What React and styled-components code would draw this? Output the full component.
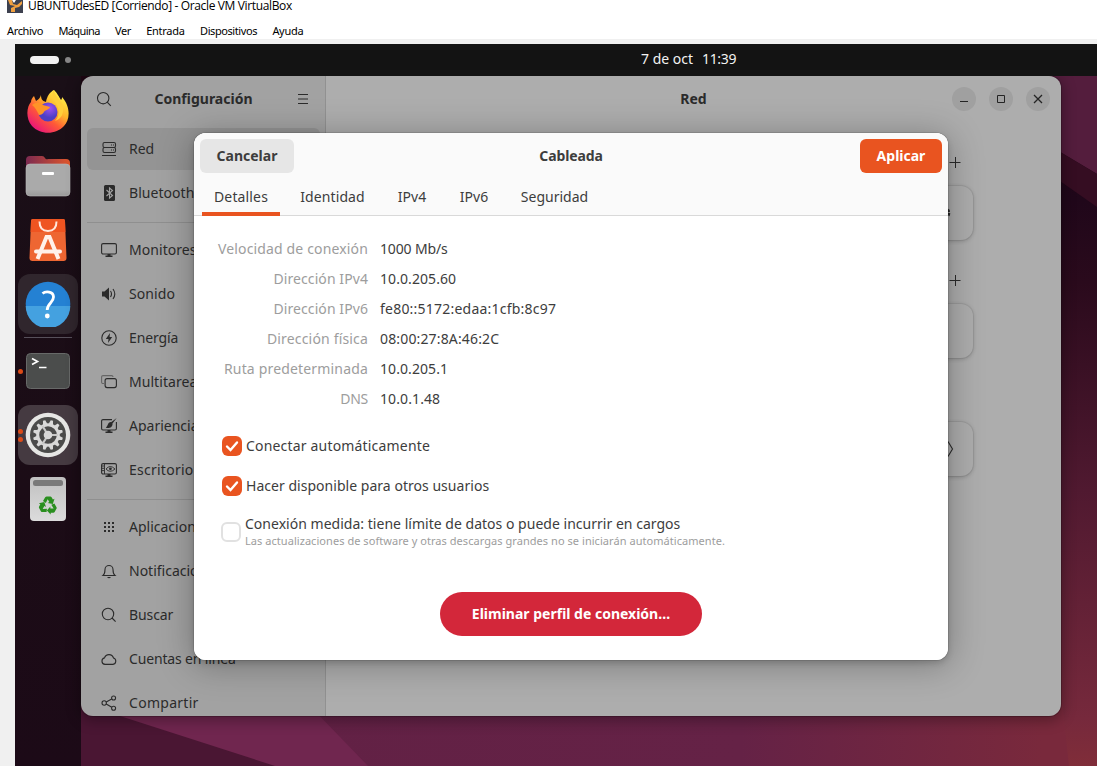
import React from "react";
import styled, { createGlobalStyle, css } from "styled-components";

const Global = createGlobalStyle`
  * { box-sizing: border-box; }
  html, body { margin: 0; padding: 0; overflow: hidden; background: #f0f0f0; }
  body { font-family: "Noto Sans", "Open Sans", sans-serif; }
`;

const Label = styled.span`
  white-space: pre;
  letter-spacing: ${(p) => p.$track || 0}px;
`;

const HostWindow = styled.div`
  width: 1097px;
  height: 766px;
  display: flex;
  flex-direction: column;
  overflow: hidden;
  background: #f0f0f0;
`;
const HostTitle = styled.div`
  height: 22px;
  flex: none;
  display: flex;
  align-items: flex-start;
  gap: 5px;
  padding-left: 7px;
  background: #fff;
  color: #000;
  font: 12px/12px "Open Sans", sans-serif;
  & > svg { flex: none; }
`;
const HostMenu = styled.div`
  height: 17px;
  flex: none;
  display: flex;
  gap: 15.4px;
  padding-left: 7px;
  background: #fff;
  color: #000;
  font: 11px/17px "Noto Sans", sans-serif;
`;
const Guest = styled.div`
  flex: 1;
  margin: 5px 0 0 15px;
  display: flex;
  flex-direction: column;
  min-height: 0;
`;
const TopBar = styled.div`
  height: 32px;
  flex: none;
  display: grid;
  grid-template-columns: 626px 1fr;
  align-items: center;
  background: #131313;
  color: #f2f2f2;
  font-size: 14px;
  line-height: 20px;
`;
const Workspaces = styled.div`
  display: flex;
  align-items: center;
  gap: 6px;
  padding-left: 15px;
`;
const ActiveSpace = styled.i`
  width: 29px;
  height: 8px;
  border-radius: 4px;
  background: #f2f2f2;
`;
const IdleSpace = styled.i`
  width: 6px;
  height: 6px;
  border-radius: 3px;
  background: #868686;
`;
const Clock = styled.div`
  display: flex;
  gap: 9px;
  margin-top: -3px;
`;
const Desktop = styled.div`
  flex: 1;
  display: flex;
  position: relative;
  isolation: isolate;
  overflow: hidden;
`;
const Wallpaper = styled.svg`
  position: absolute;
  inset: 0;
  z-index: -1;
`;
const Dock = styled.div`
  width: 66px;
  flex: none;
  padding: 6px 3px;
  display: flex;
  flex-direction: column;
  gap: 4px;
  background: linear-gradient(#1a0f17, #1b0c16 60%, #1c0a17);
`;
const DockItem = styled.div`
  width: 60px;
  height: 60px;
  flex: none;
  display: grid;
  place-items: center;
  position: relative;
  border-radius: 12px;
  background: ${(p) => p.$bg || "transparent"};
`;
const DockLine = styled.div`
  height: 1px;
  flex: none;
  margin: -1px 6px;
  background: #57505a;
`;
const Running = styled.div`
  position: absolute;
  left: 0;
  top: 0;
  height: 100%;
  display: flex;
  flex-direction: column;
  justify-content: center;
  gap: 3px;
  & > i { width: 5px; height: 5px; border-radius: 50%; background: #dc4a17; }
`;

const Window = styled.div`
  width: 980px;
  height: 640px;
  flex: none;
  display: flex;
  position: relative;
  border-radius: 12px;
  box-shadow: 0 3px 14px 2px rgba(0, 0, 0, 0.3), 0 0 0 1px rgba(20, 10, 15, 0.25);
  color: #2b2b2b;
`;
const Sidebar = styled.div`
  width: 245px;
  height: 100%;
  flex: none;
  padding: 0 5px 0 6px;
  overflow: hidden;
  border-right: 1px solid #919191;
  border-radius: 12px 0 0 12px;
  background: #a2a2a2;
`;
const SideHeader = styled.div`
  height: 45px;
  display: grid;
  grid-template-columns: 34px 1fr 34px;
  align-items: center;
  justify-items: center;
  margin-bottom: 7px;
  font-size: 14px;
  font-weight: 700;
  color: #2b2b2b;
  & > span { margin-top: -1px; }
`;
const NavList = styled.div`
  display: flex;
  flex-direction: column;
  gap: 2px;
`;
const NavRow = styled.div`
  height: 42px;
  flex: none;
  display: flex;
  align-items: center;
  gap: 12px;
  padding-left: 14px;
  border-radius: 6px;
  font-size: 14px;
  background: ${(p) => (p.$active ? "#949494" : "transparent")};
  & > svg { flex: none; }
  & > span { margin-top: -2px; }
`;
const NavLine = styled.div`
  height: 1px;
  flex: none;
  margin: 6px 0 4px;
  background: #8f8f8f;
`;
const Content = styled.div`
  flex: 1;
  display: flex;
  flex-direction: column;
  align-items: center;
  overflow: hidden;
  border-radius: 0 12px 12px 0;
  background: #adadad;
`;
const ContentHeader = styled.div`
  width: 100%;
  height: 46px;
  flex: none;
  display: grid;
  grid-template-columns: 1fr auto 1fr;
  align-items: center;
  padding: 0 11px;
  font-size: 14px;
  font-weight: 700;
  & > span { margin-top: -2px; }
`;
const WindowButtons = styled.div`
  grid-column: 3;
  justify-self: end;
  display: flex;
  gap: 13px;
`;
const RoundButton = styled.div`
  width: 24px;
  height: 24px;
  border-radius: 50%;
  background: #a0a0a0;
`;
const Section = styled.div`
  width: 559px;
  margin-top: 22px;
`;
const SectionHead = styled.div`
  height: 36px;
  display: flex;
  align-items: center;
  justify-content: flex-end;
  padding-right: 10px;
`;
const Card = styled.div`
  height: 54px;
  margin: 6px 0 0;
  display: flex;
  align-items: center;
  justify-content: flex-end;
  padding-right: ${(p) => p.$end || 18}px;
  border-radius: 12px;
  background: #adadad;
  box-shadow: 0 0 0 1px rgba(0, 0, 0, 0.05), 0 1px 4px rgba(0, 0, 0, 0.22);
`;

const Dialog = styled.div`
  position: absolute;
  left: 113px;
  top: 57px;
  width: 754px;
  height: 527px;
  overflow: hidden;
  border-radius: 12px;
  background: #fff;
  color: #3d3d3d;
`;
const DialogShadow = styled(Dialog)`
  overflow: visible;
  box-shadow: 0 3px 6px rgba(0, 0, 0, 0.16), 0 4px 34px 2px rgba(0, 0, 0, 0.28), 0 0 0 1px rgba(0, 0, 0, 0.1);
`;
const DialogHead = styled.div`
  height: 83px;
  background: #fafafa;
  border-bottom: 1px solid #d9d9d9;
`;
const DialogBar = styled.div`
  height: 46px;
  display: grid;
  grid-template-columns: 1fr auto 1fr;
  align-items: center;
  padding: 0 6px;
  font-size: 14px;
  font-weight: 700;
  margin-bottom: 1px;
  & > span { margin-top: -2px; }
`;
const Button = styled.button`
  height: 34px;
  width: ${(p) => p.$w}px;
  padding: 0 0 2px;
  border: 0;
  border-radius: 6px;
  font: 700 14px "Noto Sans", sans-serif;
  background: #e6e6e6;
  color: #3d3d3d;
  ${(p) => p.$kind === "suggested" && css`
    justify-self: end;
    background: #e95420;
    color: #fff;
  `}
  ${(p) => p.$kind === "destructive" && css`
    height: 44px;
    border-radius: 22px;
    background: #d3273a;
    color: #fff;
  `}
`;
const Tabs = styled.div`
  display: flex;
  gap: 8px;
  padding-left: 8px;
`;
const Tab = styled.div`
  width: ${(p) => p.$w}px;
  height: 36px;
  text-align: center;
  font-size: 14px;
  line-height: 33px;
  box-shadow: ${(p) => (p.$active ? "inset 0 -4px #e95420" : "none")};
`;
const Details = styled.div`
  display: grid;
  grid-template-columns: 174px 1fr;
  column-gap: 12px;
  grid-auto-rows: 30px;
  align-items: center;
  padding-top: 17px;
  font-size: 14px;
`;
const Key = styled.div`
  text-align: right;
  color: #9d9d9d;
`;
const Options = styled.div`
  display: flex;
  flex-direction: column;
  padding: 13px 0 0 27px;
`;
const Option = styled.div`
  height: 40px;
  display: flex;
  align-items: center;
  gap: 4px;
  padding-left: ${(p) => (p.$tall ? 0 : 1)}px;
  margin-top: ${(p) => (p.$tall ? 6 : 0)}px;
  font-size: 14px;
  & > span { margin-top: -2px; }
`;
const Box = styled.i`
  width: 20px;
  height: 20px;
  flex: none;
  border-radius: 6px;
  background: ${(p) => (p.$on ? "#e95420" : "#fff")};
  border: ${(p) => (p.$on ? "0" : "2px solid #e1e1e1")};
  & > svg { display: block; }
`;
const TwoLines = styled.div`
  display: flex;
  flex-direction: column;
  line-height: 18px;
`;
const Hint = styled.div`
  color: #9d9d9d;
  font-size: 11px;
  line-height: 16px;
`;
const Foot = styled.div`
  display: flex;
  justify-content: center;
  padding-top: 40px;
`;

const Sym = ({ children, size = 16 }) => (
  <svg width={size} height={size} viewBox="0 0 16 16" fill="none" stroke="#2b2b2b" strokeWidth="1.1">{children}</svg>
);
const SearchIcon = () => <Sym><circle cx="7.2" cy="7.2" r="5.7" /><path d="M11.2 11.2l3.600 3.600" /></Sym>;
const monitor = <><rect x=".6" y="1.6" width="14.8" height="10.4" rx="1.5" /><path d="M6.5 12h3v1.5h2V15h-7v-1.5h2z" fill="#2b2b2b" stroke="none" /></>;
const icons = {
  red: <><rect x="2" y="1.5" width="12.5" height="5" rx="1.5" /><rect x="2" y="6.5" width="12.5" height="5" rx="1.5" /><path d="M1 14.5h14M10 4h1M12 4h1M10 9h1M12 9h1" /></>,
  bt: <><rect x="3" y="0" width="11" height="16" rx="1.5" fill="#2b2b2b" stroke="none" /><path d="M5.5 5l6 5.5L8.5 13V3l3 2.5-6 5.5" stroke="#a2a2a2" /></>,
  mon: monitor,
  son: <><path d="M1 5.5h2.5L8 1.5v13L3.5 10.5H1z" fill="#2b2b2b" stroke="none" /><path d="M9.5 5q2 3 0 6M12 3q3.6 5 0 10" /></>,
  ene: <><circle cx="8" cy="8" r="7.2" /><path d="M9 3L4.8 9h2.7L7 13l4.2-6H8.6z" fill="#2b2b2b" stroke="none" /></>,
  mul: <><path d="M3 9.5H2A1.4 1.4 0 0 1 .6 8V3A1.4 1.4 0 0 1 2 1.6h8.5A1.4 1.4 0 0 1 12 3" stroke="#666" /><rect x="4.1" y="4.6" width="11.3" height="9" rx="2" /></>,
  apa: <><path d="M11 1.6H2A1.4 1.4 0 0 0 .6 3v7.6A1.4 1.4 0 0 0 2 12h12a1.4 1.4 0 0 0 1.4-1.4V4" /><path d="M6.5 12h3v1.5h2V15h-7v-1.5h2zM15.7 0L10 4.2l1.3 1.5zM9.700 4C7 3.800 7 8 4.800 9.700c3.500 1.100 7-.7 6.700-4z" fill="#2b2b2b" stroke="none" /></>,
  esc: <>{monitor}<path d="M3.5 2v10M1 4h2M1 6.3h2M1 8.6h2M5 7q4-5 9 0-5 4.6-9 0z" strokeWidth=".9" /><circle cx="9.4" cy="6.8" r="1.4" fill="#2b2b2b" stroke="none" /></>,
  apl: <path d="M3 4h2M7 4h2M11 4h2M3 8h2M7 8h2M11 8h2M3 12h2M7 12h2M11 12h2" strokeWidth="2" />,
  not: <><path d="M2 12.5h12c-1.8-1.5-2-3-2-6a4 4 0 0 0-8 0c0 3-.2 4.500-2 6z" /><path d="M6 14h4q-2 2.500-4 0z" fill="#2b2b2b" stroke="none" /></>,
  bus: <><circle cx="7" cy="7" r="5.700" /><path d="M11 11l3.600 3.600" /></>,
  cue: <path d="M4 13.400a3.300 3.300 0 0 1-.5-6.500A4.700 4.700 0 0 1 12.500 7 3.300 3.300 0 0 1 12 13.400z" />,
  com: <><circle cx="3.200" cy="8" r="2.200" /><circle cx="12.600" cy="3" r="2" /><circle cx="12.600" cy="13.300" r="2" /><path d="M5.200 7l5.500-3M5.200 9l5.600 3.300" /></>,
};

const menus = [["Archivo", -0.36], ["Máquina", -0.6], ["Ver", -0.5], ["Entrada", -0.26], ["Dispositivos", -0.42], ["Ayuda", -0.28]];

const nav = [
  ["red", "Red"], ["bt", "Bluetooth", 0.05], null,
  ["mon", "Monitores", 0.05], ["son", "Sonido", 0.1], ["ene", "Energía", -0.1], ["mul", "Multitarea", 0.05], ["apa", "Apariencia"], ["esc", "Escritorio remoto", 0.25], null,
  ["apl", "Aplicaciones"], ["not", "Notificaciones"], ["bus", "Buscar", -0.1], ["cue", "Cuentas en línea", -0.15], ["com", "Compartir", 0.28],
];

const details = [
  ["Velocidad de conexión", "1000 Mb/s", 0.15, -0.15],
  ["Dirección IPv4", "10.0.205.60", 0.08, 0.08],
  ["Dirección IPv6", "fe80::5172:edaa:1cfb:8c97", 0.08, 0.22],
  ["Dirección física", "08:00:27:8A:46:2C", 0.17, 0.15],
  ["Ruta predeterminada", "10.0.205.1", 0.17, 0.08],
  ["DNS", "10.0.1.48", -0.3, 0.1],
];

const Firefox = () => (
  <svg width="44" height="46" viewBox="0 0 44 46">
    <defs>
      <linearGradient id="ffa" x1=".85" y1=".1" x2=".2" y2=".95">
        <stop offset="0" stopColor="#fff14a" /><stop offset=".35" stopColor="#ffb52b" /><stop offset=".62" stopColor="#ff5a36" /><stop offset="1" stopColor="#e8127c" />
      </linearGradient>
      <radialGradient id="ffb" cx=".6" cy=".3"><stop offset="0" stopColor="#a050f0" /><stop offset="1" stopColor="#4d3fc4" /></radialGradient>
    </defs>
    <path d="M28 1c4 4 5 7 7 10 1-1 1-2 1-3 9 10 8 23 2 29C30 46 14 46 6 37-1 29 1 17 5 13c0-2 1-4 3-6l2 5c3-2 4-3 5-6 0 5 2 6 5 7 1-6 4-10 8-12z" fill="url(#ffa)" />
    <circle cx="22" cy="23" r="9.500" fill="url(#ffb)" />
    <path d="M6 16c4-3 8-3 11 0 2 1 5 1 7 2-1 3-5 3-6 5-1 2-3 3-5 3-2-4-4-8-7-10z" fill="#ff9427" />
    <path d="M28 1c-4 5 0 10 3 15 3 6 2 12-2 16 6-2 9-7 8-14-1-7-8-9-9-17z" fill="#ffcf3a" />
  </svg>
);
const Files = () => (
  <svg width="46" height="42" viewBox="0 0 46 42">
    <defs>
      <linearGradient id="fa"><stop offset="0" stopColor="#7c2a50" /><stop offset="1" stopColor="#e0572c" /></linearGradient>
      <linearGradient id="fb" x2="0" y2="1"><stop offset="0" stopColor="#aaa" /><stop offset=".8" stopColor="#aaa" /><stop offset="1" stopColor="#999" /></linearGradient>
    </defs>
    <path d="M1 5q0-4 4-4h12q2 0 3 2t3 1h18q4 0 4 4v12H1z" fill="url(#fa)" />
    <rect x="1" y="9" width="44" height="32" rx="4" fill="url(#fb)" stroke="#bbb" strokeWidth=".6" />
    <rect x="17" y="17" width="12" height="3" rx="1" fill="#fff" />
  </svg>
);
const Store = () => (
  <svg width="38" height="44" viewBox="0 0 38 44">
    <path d="M4 1h30q2 0 2 2l1.500 37q0 3-3 3h-31q-3 0-3-3L2 3q0-2 2-2z" fill="#ee6632" />
    <path d="M4 1h30q2 0 2 2l.4 11H1.600L2 3q0-2 2-2z" fill="#ef5421" />
    <path d="M10.500 3.500q0 9.500 8.500 9.500t8.500-9.500" fill="none" stroke="#ffe7dc" strokeWidth="2" />
    <path d="M8.500 41L17.500 19h3l9 22" fill="none" stroke="#fff1ea" strokeWidth="4" />
    <path d="M7 33.500h24" stroke="#fff1ea" strokeWidth="4" strokeLinecap="round" />
  </svg>
);
const Help = () => (
  <svg width="46" height="46" viewBox="0 0 46 46">
    <circle cx="23" cy="23" r="22.300" fill="#2481d3" />
    <path d="M.7 25a22.300 22.300 0 0 0 44.600 0z" fill="#44a1e0" />
    <path d="M17.500 12.500c3-2.500 11-2.500 11 3.500 0 6-6.300 6-6.300 13" fill="none" stroke="#fff" strokeWidth="2.800" />
    <circle cx="22.300" cy="35" r="2.400" fill="#fff" />
  </svg>
);
const Terminal = () => (
  <svg width="46" height="38" viewBox="0 0 46 38">
    <rect x="1.500" y="1.500" width="43" height="35" rx="4" fill="#4b4d4c" stroke="#676968" />
    <path d="M7 6.500l5.500 3-5.500 3" fill="none" stroke="#fff" strokeWidth="1.700" />
    <path d="M14 15.500h7.500" stroke="#fff" strokeWidth="1.500" />
  </svg>
);
const Settings = () => (
  <svg width="46" height="46" viewBox="0 0 46 46">
    <circle cx="23" cy="23" r="22.300" fill="#e6e6e4" />
    <circle cx="23" cy="23" r="18" fill="#4b4b4a" />
    {Array.from({ length: 12 }, (_, i) => <path key={i} d="M20.800 12l1-4h2.400l1 4z" fill="#d9d9d8" transform={`rotate(${i * 30 + 15} 23 23)`} />)}
    <circle cx="23" cy="23" r="10.300" fill="none" stroke="#d9d9d8" strokeWidth="3" />
    <path d="M23 23h10M23 23l-5.500-9M23 23l-5.500 9" stroke="#c8c8c7" strokeWidth="2.200" />
    <circle cx="23" cy="23" r="4.300" fill="#d9d9d8" />
  </svg>
);
const Trash = () => (
  <svg width="38" height="46" viewBox="0 0 38 46">
    <defs><linearGradient id="tr" x2="0" y2="1"><stop offset="0" stopColor="#c0c0c0" /><stop offset="1" stopColor="#dcdcdc" /></linearGradient></defs>
    <rect x="1" y="1" width="36" height="44" rx="4" fill="url(#tr)" />
    <rect x="4" y="4" width="30" height="6" rx="2.500" fill="#7a7a7a" />
    <g fill="#2a8f1f">
      {[0, 120, 240].map((a) => (
        <g key={a} transform={`rotate(${a} 19 29.500)`}>
          <path d="M14 25l2.200-3.700q.5-.8 1.500-.8h3.600q.8 0 1.300.8l1.300 2.200 1.600-.8-1.700 5.300-5.200-1 1.700-1-1.600-2.800-1.900 3.800z" />
        </g>
      ))}
    </g>
  </svg>
);

export default function App() {
  return (
    <HostWindow>
      <Global />
      <HostTitle>
        <svg width="16" height="13" viewBox="0 0 16 13">
          <path d="M0 0h16v13H0z" fill="#3d414f" />
          <path d="M1 0h4l1 4 4 1 5-4v3l-3 3-4 1v4H4V8l4-2-5-1z" fill="#f0a040" />
          <path d="M5 0h4l-2 3z" fill="#fff" />
        </svg>
        <Label $track={-0.36}>UBUNTUdesED [Corriendo] - Oracle VM VirtualBox</Label>
      </HostTitle>
      <HostMenu>
        {menus.map(([t, track]) => <Label key={t} $track={track}>{t}</Label>)}
      </HostMenu>
      <Guest>
        <TopBar>
          <Workspaces><ActiveSpace /><IdleSpace /></Workspaces>
          <Clock><Label>7 de oct</Label><Label $track={-0.35}>11:39</Label></Clock>
        </TopBar>
        <Desktop>
          <Wallpaper width="1082" height="690" viewBox="15 76 1082 690">
            <defs>
              <linearGradient id="wr" x2="0" y2="1"><stop offset="0" stopColor="#1d0612" /><stop offset=".18" stopColor="#20071a" /><stop offset=".3" stopColor="#2a0a1c" /><stop offset=".6" stopColor="#501930" /><stop offset=".93" stopColor="#76293c" /><stop offset="1" stopColor="#802d39" /></linearGradient>
              <linearGradient id="wb" gradientUnits="userSpaceOnUse" x1="320" y1="0" x2="1070" y2="30"><stop offset="0" stopColor="#622145" /><stop offset=".6" stopColor="#652246" /><stop offset="1" stopColor="#79293c" /></linearGradient>
            </defs>
            <path d="M15 76h1082v690H15z" fill="url(#wr)" />
            <path d="M1040 76h57v98l-57-34z" fill="#541d3d" />
            <path d="M1040 140l57 34v33l-57-40z" fill="#350d22" />
            <path d="M15 690h1046l8 76H15z" fill="url(#wb)" />
            <path d="M15 680h270l83 86H15z" fill="#70264f" />
            <path d="M15 682l105 34 155 50H15z" fill="#4a1633" />
          </Wallpaper>
          <Dock>
            <DockItem><Firefox /></DockItem>
            <DockItem><Files /></DockItem>
            <DockItem><Store /></DockItem>
            <DockItem $bg="#30262d"><Help /></DockItem>
            <DockLine />
            <DockItem><Terminal /><Running><i /></Running></DockItem>
            <DockItem $bg="#453a41"><Settings /><Running><i /><i /></Running></DockItem>
            <DockItem><Trash /></DockItem>
          </Dock>
          <Window>
            <Sidebar>
              <SideHeader>
                <SearchIcon />
                <Label>Configuración</Label>
                <Sym><path d="M3 3.500h10M3 8h10M3 12.500h10" /></Sym>
              </SideHeader>
              <NavList>
                {nav.map((n, i) => n
                  ? <NavRow key={i} $active={i === 0}><Sym>{icons[n[0]]}</Sym><Label $track={n[2]}>{n[1]}</Label></NavRow>
                  : <NavLine key={i} />)}
              </NavList>
            </Sidebar>
            <Content>
              <ContentHeader>
                <i />
                <Label>Red</Label>
                <WindowButtons>
                  <RoundButton><svg width="24" height="24" stroke="#242424"><path d="M8 14.500h8" /></svg></RoundButton>
                  <RoundButton><svg width="24" height="24" stroke="#242424" fill="none"><path d="M8.500 8.500h7v7h-7z" /></svg></RoundButton>
                  <RoundButton><svg width="24" height="24" stroke="#242424" strokeWidth="1.300"><path d="M8 8l8 8M16 8l-8 8" /></svg></RoundButton>
                </WindowButtons>
              </ContentHeader>
              <Section>
                <SectionHead><Sym><path d="M2.500 8.500h11M8.500 3v11" strokeWidth="1" /></Sym></SectionHead>
                <Card $end={22}><Sym><circle cx="8" cy="8" r="4" strokeWidth="2.500" /><circle cx="8" cy="8" r="6" strokeWidth="2.500" strokeDasharray="2.700 2.012" /></Sym></Card>
              </Section>
              <Section>
                <SectionHead><Sym><path d="M2.500 8.500h11M8.500 3v11" strokeWidth="1" /></Sym></SectionHead>
                <Card />
              </Section>
              <Section>
                <SectionHead />
                <Card><Sym><path d="M9 0.500l4.500 7.500L9 15.500" /></Sym></Card>
              </Section>
            </Content>
            <DialogShadow />
            <Dialog>
              <DialogHead>
                <DialogBar>
                  <Button $w={94}><Label>Cancelar</Label></Button>
                  <Label $track={-0.12}>Cableada</Label>
                  <Button $w={82} $kind="suggested"><Label>Aplicar</Label></Button>
                </DialogBar>
                <Tabs>
                  <Tab $w={78} $active><Label $track={0.15}>Detalles</Label></Tab>
                  <Tab $w={89}><Label $track={0.1}>Identidad</Label></Tab>
                  <Tab $w={54}><Label>IPv4</Label></Tab>
                  <Tab $w={54}><Label>IPv6</Label></Tab>
                  <Tab $w={91}><Label>Seguridad</Label></Tab>
                </Tabs>
              </DialogHead>
              <Details>
                {details.map(([k, v, kt, vt]) => (
                  <React.Fragment key={k}><Key><Label $track={kt}>{k}</Label></Key><Label $track={vt}>{v}</Label></React.Fragment>
                ))}
              </Details>
              <Options>
                {[["Conectar automáticamente", 0.18], ["Hacer disponible para otros usuarios", 0.03]].map(([t, track]) => (
                  <Option key={t}>
                    <Box $on><svg width="20" height="20" fill="none" stroke="#fff" strokeWidth="2.400" strokeLinecap="round"><path d="M5 10.500l3.500 3.500L15 6.500" /></svg></Box>
                    <Label $track={track}>{t}</Label>
                  </Option>
                ))}
                <Option $tall>
                  <Box />
                  <TwoLines>
                    <Label $track={0.02}>Conexión medida: tiene límite de datos o puede incurrir en cargos</Label>
                    <Hint><Label $track={0.05}>Las actualizaciones de software y otras descargas grandes no se iniciarán automáticamente.</Label></Hint>
                  </TwoLines>
                </Option>
              </Options>
              <Foot><Button $w={262} $kind="destructive"><Label>Eliminar perfil de conexión…</Label></Button></Foot>
            </Dialog>
          </Window>
        </Desktop>
      </Guest>
    </HostWindow>
  );
}
